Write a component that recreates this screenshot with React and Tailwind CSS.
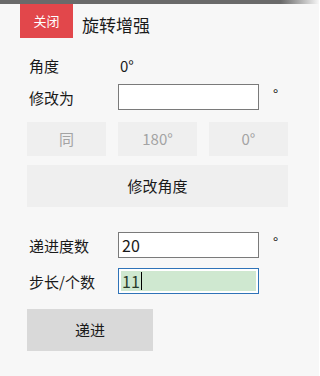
export default function App() {
  const font = { fontFamily: '"Noto Sans CJK SC", "Noto Sans", sans-serif' };
  return (
    <div className="w-[319px] h-[376px] bg-[#f7f7f7] overflow-hidden text-[#1a1a1a]" style={font}>
      <div className="h-[4px] w-[319px] bg-gradient-to-r from-[#6a6a6a] from-[88%] to-[#f7f7f7]" />
      <div className="flex items-center pl-[20px] h-[34px]">
        <div className="w-[53px] h-[34px] bg-[#e2474b] text-white text-[13px] leading-none flex items-center justify-center pb-[1px]">
          关闭
        </div>
        <div className="ml-[9px] text-[17px] leading-none pt-[6px]">旋转增强</div>
      </div>

      <div className="pl-[27px]">
        <div className="flex items-center h-[24px] mt-[15px]">
          <div className="w-[91px] pl-[2px] text-[15px] leading-none">角度</div>
          <div className="pl-[2px] text-[15px] leading-none">0°</div>
        </div>

        <div className="flex items-center h-[26px] mt-[7px]">
          <div className="w-[91px] pl-[2px] text-[15px] leading-none">修改为</div>
          <div className="w-[141px] h-[26px] bg-white border border-[#7a7a7a]" />
          <div className="ml-[14px] text-[14px] leading-none pb-[6px]">°</div>
        </div>

        <div className="flex mt-[12px] gap-[12px]">
          <div className="w-[79px] h-[34px] bg-[#efefef] text-[#a3a3a3] text-[15px] flex items-center justify-center">同</div>
          <div className="w-[79px] h-[34px] bg-[#efefef] text-[#a3a3a3] text-[15px] flex items-center justify-center">180°</div>
          <div className="w-[79px] h-[34px] bg-[#efefef] text-[#a3a3a3] text-[15px] flex items-center justify-center">0°</div>
        </div>

        <div className="w-[261px] h-[42px] mt-[9px] bg-[#efefef] text-[15px] flex items-center justify-center">
          修改角度
        </div>

        <div className="flex items-center h-[26px] mt-[25px]">
          <div className="w-[91px] pl-[2px] text-[15px] leading-none">递进度数</div>
          <div className="w-[141px] h-[26px] bg-white border border-[#7a7a7a] flex items-center pl-[3px] text-[16px] leading-none">20</div>
          <div className="ml-[14px] text-[14px] leading-none pb-[6px]">°</div>
        </div>

        <div className="flex items-center h-[26px] mt-[10px]">
          <div className="w-[91px] pl-[2px] text-[15px] leading-none">步长/个数</div>
          <div className="w-[141px] h-[26px] bg-white border border-[#2f73b8] p-[2px]">
            <div className="w-full h-full bg-[#cfe8d0] flex items-center pl-[1px] text-[16px] leading-none text-[#2a3a2a]">
              <span>11</span>
              <span className="w-[1px] h-[18px] bg-black ml-[1px]" />
            </div>
          </div>
        </div>

        <div className="w-[126px] h-[42px] mt-[15px] bg-[#d9d9d9] text-[15px] flex items-center justify-center">
          递进
        </div>
      </div>
    </div>
  );
}
